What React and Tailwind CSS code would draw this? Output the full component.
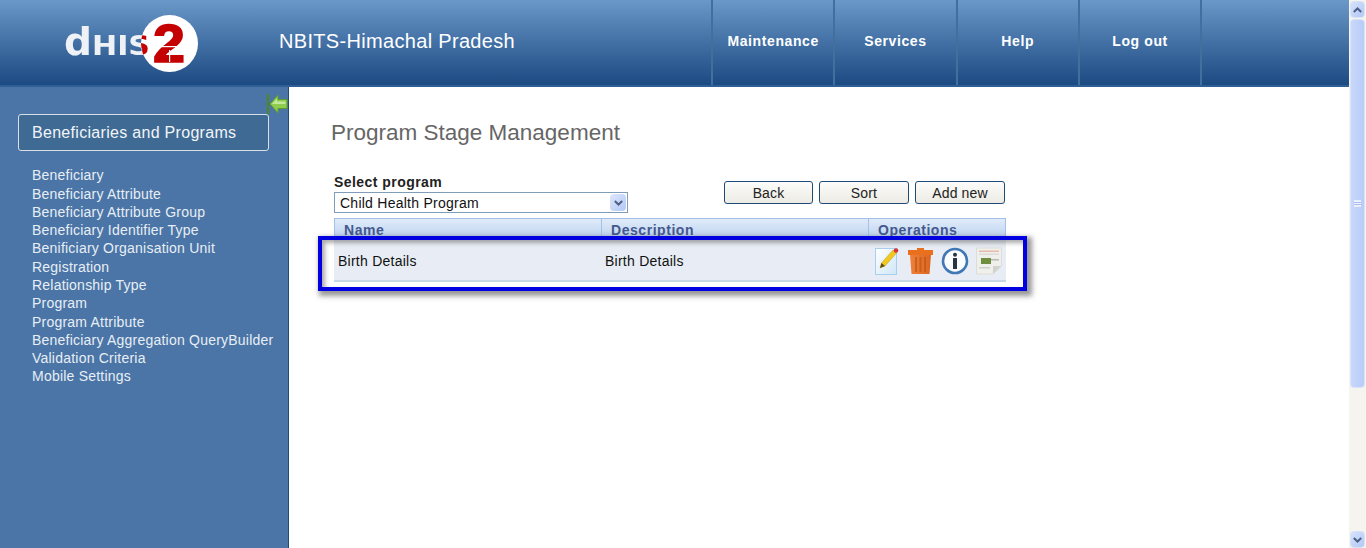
const font = { fontFamily: '"Liberation Sans", Arial, sans-serif' };

const sideItems = [
  "Beneficiary",
  "Beneficiary Attribute",
  "Beneficiary Attribute Group",
  "Beneficiary Identifier Type",
  "Benificiary Organisation Unit",
  "Registration",
  "Relationship Type",
  "Program",
  "Program Attribute",
  "Beneficiary Aggregation QueryBuilder",
  "Validation Criteria",
  "Mobile Settings",
];

const navItems = ["Maintenance", "Services", "Help", "Log out"];

function Logo() {
  const white = "#eef2f7";
  return (
    <svg width="140" height="60" viewBox="0 0 140 60" className="block">
      <defs>
        <filter id="soft" x="-10%" y="-10%" width="120%" height="120%">
          <feGaussianBlur stdDeviation="0.4" />
        </filter>
        <clipPath id="disc">
          <circle cx="104.5" cy="29.5" r="28.5" />
        </clipPath>
      </defs>
      <g filter="url(#soft)">
        <text x="-1" y="41" fontFamily="DejaVu Sans" fontWeight="700" fontSize="37" fill={white} textLength="28" lengthAdjust="spacingAndGlyphs">d</text>
        <text x="27" y="41" fontFamily="DejaVu Sans" fontWeight="700" fontSize="27" fill={white} textLength="58" lengthAdjust="spacingAndGlyphs">HIS</text>
        <circle cx="104.5" cy="29.5" r="28.5" fill="#ffffff" />
        <g clipPath="url(#disc)">
          <text x="27" y="41" fontFamily="DejaVu Sans" fontWeight="700" fontSize="27" fill="#c40000" textLength="58" lengthAdjust="spacingAndGlyphs">HIS</text>
        </g>
        <text x="88" y="48" fontFamily="Liberation Sans" fontWeight="700" fontSize="53" fill="#c40000" stroke="#c40000" strokeWidth="1.6" textLength="32" lengthAdjust="spacingAndGlyphs">2</text>
        <rect x="88" y="32" width="34" height="1.2" fill="#ffffff" />
        <rect x="104" y="36" width="1.2" height="12" fill="#ffffff" />
      </g>
    </svg>
  );
}

function BackArrow() {
  return (
    <svg width="21" height="20" viewBox="0 0 21 20" className="block">
      <rect x="0" y="0" width="2" height="20" fill="#4d8a1c" />
      <path d="M3 10 L11 1 V5.5 H20 V14.5 H11 V19 Z" fill="#8fcb4e" stroke="#5e9c28" strokeWidth="1" />
      <path d="M5 10 L10 4.5 V7.5 H18.5 V10 Z" fill="#c4e89a" />
    </svg>
  );
}

function EditIcon() {
  return (
    <svg width="24" height="28" viewBox="0 0 24 28" className="block">
      <defs>
        <linearGradient id="pg" x1="0" y1="0" x2="1" y2="1">
          <stop offset="0" stopColor="#ffffff" />
          <stop offset="1" stopColor="#cfe6f8" />
        </linearGradient>
      </defs>
      <rect x="0.5" y="1.5" width="21" height="26" fill="url(#pg)" stroke="#a8d0ee" />
      <path d="M5 21 L6.5 16 L18 3 L21.5 6 L10 19 Z" fill="#f2c81f" stroke="#c09a10" strokeWidth="0.5" />
      <path d="M5 21 L6.5 16 L10 19 Z" fill="#5b4a20" />
      <circle cx="21" cy="3.5" r="2.3" fill="#d8343c" />
    </svg>
  );
}

function TrashIcon() {
  return (
    <svg width="27" height="27" viewBox="0 0 27 27" className="block">
      <defs>
        <linearGradient id="tg" x1="0" y1="0" x2="1" y2="0">
          <stop offset="0" stopColor="#f0803a" />
          <stop offset="1" stopColor="#dc661f" />
        </linearGradient>
      </defs>
      <path d="M10 3 V1 H17 V3 H26 V8 H1 V3 Z" fill="#e8701f" />
      <path d="M3 8 H24 L22.5 27 H4.5 Z" fill="url(#tg)" />
      <rect x="8" y="10" width="2" height="15" fill="#b04f14" opacity="0.55" />
      <rect x="12.5" y="10" width="2" height="15" fill="#b04f14" opacity="0.55" />
      <rect x="17" y="10" width="2" height="15" fill="#b04f14" opacity="0.55" />
    </svg>
  );
}

function InfoIcon() {
  return (
    <svg width="28" height="28" viewBox="0 0 28 28" className="block">
      <circle cx="14" cy="14" r="12" fill="#fbfcfe" stroke="#3f78b4" strokeWidth="2.6" />
      <circle cx="14" cy="7.8" r="2" fill="#2b3440" />
      <rect x="12" y="11" width="4" height="11" fill="#2b3440" />
    </svg>
  );
}

function ReportIcon() {
  return (
    <svg width="26" height="28" viewBox="0 0 26 28" className="block">
      <path d="M0.5 1 H25.5 V19 L17 27 H0.5 Z" fill="#efefec" stroke="#dcdcd8" />
      <path d="M25.5 19 H17 V27 Z" fill="#d2d2ce" />
      <rect x="3" y="3.5" width="20" height="1.5" fill="#eab9a8" />
      <rect x="3" y="6.5" width="20" height="1.5" fill="#dcdcd8" />
      <rect x="5" y="11" width="10" height="6" fill="#6f8f3e" />
      <rect x="15" y="12" width="8" height="1.5" fill="#b8b8b4" />
      <rect x="3" y="20" width="11" height="1.5" fill="#cfcfcb" />
    </svg>
  );
}

function ScrollBtn({ up }) {
  return (
    <div className="h-[17px] w-[15px] mx-auto rounded-sm border border-[#d8e2f8] bg-gradient-to-br from-[#d6e2fc] to-[#b4c8f5] flex items-center justify-center shrink-0">
      <svg width="9" height="6" viewBox="0 0 9 6" className="block">
        <path d={up ? "M0.8 5 L4.5 1.5 L8.2 5" : "M0.8 1 L4.5 4.5 L8.2 1"} fill="none" stroke="#4d6185" strokeWidth="2" />
      </svg>
    </div>
  );
}

function Scrollbar() {
  return (
    <div className="w-[17px] h-[548px] shrink-0 bg-[#f5f4ee] flex flex-col pt-px">
      <ScrollBtn up />
      <div className="h-[369px] w-[15px] mx-auto mt-px rounded-sm border border-[#d8e2f8] bg-gradient-to-r from-[#c9d8fb] to-[#b9ccf7] flex items-center justify-center shrink-0">
        <div className="w-[7px] h-[7px] border-y border-[#e6eeff] bg-[linear-gradient(#eef3ff_1px,#a9bdec_1px,#a9bdec_2px)] bg-[length:100%_2px]" />
      </div>
      <div className="flex-1" />
      <ScrollBtn />
    </div>
  );
}

function Button({ width, children }) {
  return (
    <div className={`${width} h-[23px] flex items-center justify-center pt-[2px] rounded-[3px] border border-[#1f4a7a] bg-gradient-to-b from-[#fcfcfa] to-[#ecebe4] text-[14px] tracking-[0.15px] text-[#222]`}>
      {children}
    </div>
  );
}

export default function App() {
  return (
    <div className="relative flex h-[548px] w-[1366px] overflow-hidden bg-white" style={font}>
      <div className="flex-1 min-w-0 flex flex-col">
        <header className="h-[87px] shrink-0 flex bg-gradient-to-b from-[#6a98c8] to-[#1c4a82] border-b-2 border-[#2f5f94]">
          <div className="w-[711px] shrink-0 flex items-center">
            <div className="w-[279px] shrink-0 pl-[65px] pt-[2px]">
              <Logo />
            </div>
            <div className="text-[20px] tracking-[0.32px] text-white pb-[4px]">NBITS-Himachal Pradesh</div>
          </div>
          {navItems.map((n) => (
            <div key={n} className="w-[122.3px] shrink-0 border-l-2 border-[#41709f] flex items-center justify-center pb-[3px] text-[14px] font-bold tracking-[0.6px] text-white">
              {n}
            </div>
          ))}
          <div className="w-[27px] border-l-2 border-[#41709f]" />
        </header>

        <div className="flex-1 min-h-0 flex">
          <aside className="relative w-[289px] shrink-0 bg-[#4a75a6] border-r border-[#1f4a7a] pl-[18px] pt-[27px]">
            <div className="absolute right-0 top-[7px]"><BackArrow /></div>
            <div className="w-[251px] h-[37px] flex items-center pl-[13px] rounded-[3px] border border-[#d8dfe6] bg-[#3f6a94] text-[16px] tracking-[0.3px] text-[#f2f5f8]">
              Beneficiaries and Programs
            </div>
            <ul className="mt-[15.4px] pl-[14px] text-[14px] tracking-[0.22px] leading-[18.27px] text-[#e8eef5]">
              {sideItems.map((s) => (
                <li key={s} className="whitespace-nowrap">{s}</li>
              ))}
            </ul>
          </aside>

          <main className="flex-1 min-w-0 pl-[42px] pt-[33px]">
            <h1 className="text-[22.5px] leading-[26px] text-[#666]">Program Stage Management</h1>
            <div className="ml-[3px] w-[672px] mt-[26px]">
              <div className="flex justify-between items-start">
                <div className="w-[294px] pt-[2px]">
                  <div className="text-[14px] leading-[16px] font-bold tracking-[0.45px] text-[#222]">Select program</div>
                  <div className="mt-[2px] h-[21px] border border-[#7f9db9] bg-white flex items-center justify-between pl-[5px] pr-px text-[14px] tracking-[0.25px] text-[#111]">
                    <span className="pt-[2px]">Child Health Program</span>
                    <div className="w-[16px] h-[17px] rounded-sm bg-gradient-to-br from-[#dde7fc] to-[#b4c8f5] flex items-center justify-center">
                      <svg width="9" height="6" viewBox="0 0 9 6" className="block">
                        <path d="M0.8 1 L4.5 4.5 L8.2 1" fill="none" stroke="#4d6185" strokeWidth="2" />
                      </svg>
                    </div>
                  </div>
                </div>
                <div className="flex gap-[6px] pr-px pt-[9px]">
                  <Button width="w-[89px]">Back</Button>
                  <Button width="w-[90px]">Sort</Button>
                  <Button width="w-[90px]">Add new</Button>
                </div>
              </div>
              <div className="mt-[5px]">
                <div className="h-[22px] flex border-x border-t border-[#a3c1e8] bg-gradient-to-b from-[#e0ebf9] to-[#b9d1ee] text-[14px] font-bold tracking-[0.55px] text-[#45598f]">
                  <div className="w-[267px] pl-[9px] pt-[1px] border-r border-[#a3c1e8]">Name</div>
                  <div className="w-[267px] pl-[9px] pt-[1px] border-r border-[#a3c1e8]">Description</div>
                  <div className="flex-1 pl-[9px] pt-[1px]">Operations</div>
                </div>
                <div className="h-[42px] flex items-center bg-[#e8edf5] border-b-2 border-[#c9d6e6] text-[14px] tracking-[0.25px] text-[#111]">
                  <div className="w-[267px] pl-[4px] pt-[3px]">Birth Details</div>
                  <div className="w-[267px] pl-[4px] pt-[3px]">Birth Details</div>
                  <div className="flex-1 flex items-center gap-[7px] pl-[7px] pt-[1px]">
                    <EditIcon />
                    <div className="ml-[1px]"><TrashIcon /></div>
                    <InfoIcon />
                    <ReportIcon />
                  </div>
                </div>
              </div>
            </div>
          </main>
        </div>
      </div>
      <Scrollbar />

      <div className="absolute left-[318px] top-[236px] w-[709px] h-[55px] border-4 border-[#0000e1] shadow-[3px_3px_5px_2px_rgba(70,70,70,0.55),inset_3px_3px_4px_rgba(70,70,70,0.45)]" />
    </div>
  );
}
